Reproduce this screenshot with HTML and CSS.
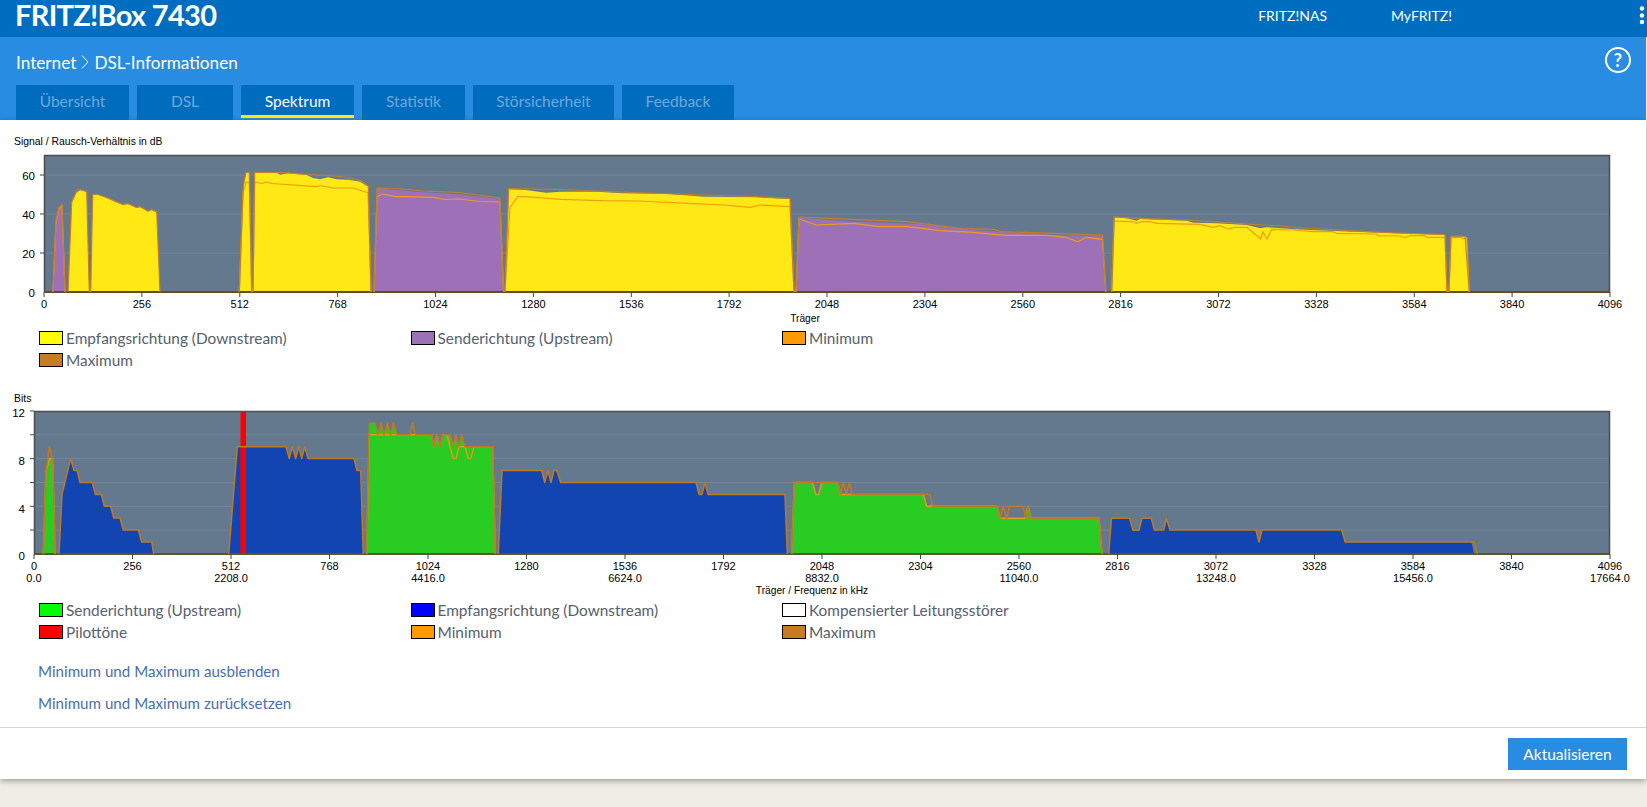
FILE: index.html
```html
<!DOCTYPE html>
<html lang="de">
<head>
<meta charset="utf-8">
<title>FRITZ!Box 7430 - DSL-Informationen</title>
<link rel="stylesheet" href="styles.css">
</head>
<body>
<div class="page">
  <header class="topbar">
    <div class="logo">FRITZ!Box 7430</div>
    <nav class="topnav"><a>FRITZ!NAS</a><a>MyFRITZ!</a></nav>
    <svg class="dots" width="6" height="22" viewBox="0 0 6 22"><circle cx="3" cy="2.5" r="2.2"/><circle cx="3" cy="9.5" r="2.2"/><circle cx="3" cy="16" r="2.2"/></svg>
  </header>
  <section class="band">
    <div class="crumbrow">
      <h1 class="crumb">Internet<svg class="chev" width="8" height="14" viewBox="0 0 8 14"><polyline points="1,0.5 7,7 1,13.5"/></svg>DSL-Informationen</h1>
      <div class="help">?</div>
    </div>
    <nav class="tabs">
      <a class="tab t1">Übersicht</a>
      <a class="tab t2">DSL</a>
      <a class="tab t3 active">Spektrum</a>
      <a class="tab t4">Statistik</a>
      <a class="tab t5">Störsicherheit</a>
      <a class="tab t6">Feedback</a>
    </nav>
  </section>
  <main class="panel">
    <svg class="chart c1" width="1646" height="195" viewBox="0 130 1646 195">
      <text class="title" x="14" y="145">Signal / Rausch-Verhältnis in dB</text>
      <rect class="plot" x="44" y="155" width="1566" height="137"/>
      <path class="grid" d="M44 175H1610M44 214H1610M44 253H1610"/>
      <path class="fy" d="M68 292L71.7 202.7 76 193 80 190 86.7 192 89.3 292Z"/>
      <path class="fy" d="M90.7 292L92.7 195 98.3 195 106.7 198 115 201.7 123 205 128 204 136.7 208 140 207 148 211.7 151.7 210 156.7 212.3 160 292Z"/>
      <path class="fy" d="M239.3 292L243.3 186.7 246 172.7 249.3 172.7 251.7 292Z"/>
      <path class="fy" d="M253 292L254.7 172.7 276.7 172.7 280 174.7 288.3 173.3 306.7 175 313 178 320 179.3 328 177.3 336.7 179.3 350 180 360 181.7 368.3 186.7 371 292Z"/>
      <path class="fy" d="M505 292L508.7 189.3 525.5 190 546 192.7 561 191.7 597 191.7 622.4 193.3 668 194 704 196.7 755 197.3 790 199 794 292Z"/>
      <path class="fy" d="M1111.7 292L1114.3 217.3 1126.7 218.3 1136.7 220.7 1140 219 1150 219.3 1186.7 220.7 1193 222.7 1216.7 223.3 1246.7 225 1260 228.3 1266.7 227.3 1280 228.3 1310 230 1353 231.7 1396.7 233.3 1445 235 1447 292Z"/>
      <path class="fy" d="M1449 292L1451 236.7 1465 236.7 1466.7 238 1469.3 292Z"/>
      <path class="fp" d="M53 292L56 220.7 59 208 62 205 62.5 205 65 292Z"/>
      <path class="fp" d="M374 292L377 188.3 398 190 423.5 192.3 459 194.3 485 197.3 500 198.7 503.6 292Z"/>
      <path class="fp" d="M796 292L799 217.7 854 221.7 919 224 973 230 1048.5 235 1102.5 235.7 1105.8 292Z"/>
      <path class="base" d="M44 292H1610"/>
      <path class="lmin" d="M53 292L56 222 59 209 62 206 65 292"/>
      <path class="lmin" d="M239.3 292L243 193 246 182.3 249.3 182.3 251.7 292M253 292L254.7 182 262 183.5 266 182 272 183.5 316.7 186.7 320 185.5 333 188 353 188 368 192.7 371 292"/>
      <path class="lmin" d="M374 292L377 196.7 382.7 194 395 196.7 408 196.7 433.7 197.3 445 199.5 459 199 480 201.5 500 202 503.6 292"/>
      <path class="lmin" d="M505 292L510 207 518 196.7 525.5 196.7 561 199.3 602 200.7 638 201 689 203.3 724.5 205 750 207.3 760 205 790 206.7 794 292"/>
      <path class="lmin" d="M796 292L799 219 816 225 854 223.3 878 226.7 908 226.7 940 230.7 973 232.3 1005 235.3 1048.5 235.3 1065 237.3 1078 241.7 1086 237.3 1102.5 239.3 1105.8 292"/>
      <path class="lmin" d="M1111.7 292L1114 221 1133 221.7 1136 223.3 1141.7 221.7 1150 221.7 1156.7 223.3 1200 224.3 1213 227.3 1220 225.7 1228 229 1235 227.3 1246.7 227.3 1260.7 239 1263 231.7 1267 239 1271.7 229.3 1293 230 1313 231.7 1333 231.7 1336.7 233.3 1376.7 234 1378 235.7 1400 236 1405 237.7 1410 235.7 1425 235.7 1426.7 237.3 1445 237.3 1447 292"/>
      <path class="lmin" d="M1449 292L1451 237.5 1461.7 237.5 1463 239 1466.7 237.5 1469.3 292"/>
      <path class="lmax" d="M53 292L56 220 59 207.5 62 204.5 65 292M68 292L71.7 202 76 192.5 80 189.5 86.7 191.5 89.3 292M90.7 292L92.7 194.5 98.3 194.5 106.7 197.5 115 201 123 204.5 128 203.5 136.7 207.5 140 206.5 148 211 151.7 209.5 156.7 212 160 292"/>
      <path class="lmax" d="M239.3 292L243.3 186 246 172.5 249.3 172.5 251.7 292M253 292L254.7 172.5 280 172.5 288.3 172.8 306.7 174.5 335 176 350 178 360 180.5 368.3 186 371 292"/>
      <path class="lmax" d="M374 292L377 188 398 188.5 423.5 191 459 192.5 485 196 500 198 503.6 292M505 292L508.7 188.5 560 189.5 620 192 704 195 755 196.5 790 198.5 794 292"/>
      <path class="lmax" d="M796 292L799 217 851 219.3 908 221.7 962 228.7 994.5 229.3 1000 231.7 1054 233.3 1102.5 235 1105.8 292"/>
      <path class="lmax" d="M1111.7 292L1114.3 217 1150 218.8 1186.7 220 1246.7 224 1280 226 1310 228.5 1353 230.8 1396.7 233 1445 234.5 1447 292M1449 292L1451 236 1465 236 1469.3 292"/>
      <path class="tick" d="M44 292V297M141.9 292V297M239.8 292V297M337.6 292V297M435.5 292V297M533.4 292V297M631.3 292V297M729.1 292V297M827 292V297M924.9 292V297M1022.8 292V297M1120.6 292V297M1218.5 292V297M1316.4 292V297M1414.3 292V297M1512.1 292V297M1610 292V297M40 175H44M40 214H44M40 253H44"/>
      <path class="frame" d="M44.5 292V155.5H1609.5V292"/>
      <g class="ylab">
        <text x="35" y="180">60</text><text x="35" y="219">40</text><text x="35" y="258">20</text><text x="35" y="297">0</text>
      </g>
      <g class="xlab">
        <text x="44" y="308">0</text><text x="141.9" y="308">256</text><text x="239.8" y="308">512</text><text x="337.6" y="308">768</text><text x="435.5" y="308">1024</text><text x="533.4" y="308">1280</text><text x="631.3" y="308">1536</text><text x="729.1" y="308">1792</text><text x="827" y="308">2048</text><text x="924.9" y="308">2304</text><text x="1022.8" y="308">2560</text><text x="1120.6" y="308">2816</text><text x="1218.5" y="308">3072</text><text x="1316.4" y="308">3328</text><text x="1414.3" y="308">3584</text><text x="1512.1" y="308">3840</text><text x="1610" y="308">4096</text>
      </g>
      <text class="axis" x="805" y="322">Träger</text>
    </svg>
    <ul class="legend lg1">
      <li><i class="sw yellow"></i>Empfangsrichtung (Downstream)</li>
      <li><i class="sw purple"></i>Senderichtung (Upstream)</li>
      <li><i class="sw orange"></i>Minimum</li>
      <li><i class="sw brown"></i>Maximum</li>
    </ul>
    <svg class="chart c2" width="1646" height="212" viewBox="0 388 1646 212">
      <text class="title" x="14" y="402">Bits</text>
      <rect class="plot" x="34" y="411" width="1576" height="143"/>
      <path class="grid" d="M34 434.8H1610M34 458.6H1610M34 482.5H1610M34 506.3H1610M34 530H1610"/>
      <path class="fg" d="M43.3 554L46 471.7 49.3 458.6 52.7 458.6 55 554Z"/>
      <path class="fb" d="M59 554L62 494.4 70.7 458.6 74 470.6 77.3 470.6 80 482.5 92.3 482.5 95.3 494.4 101.3 494.4 104.3 506.3 110.7 506.3 113.7 518 120 518 123.3 530 138.3 530 141.7 542 151.7 542 153.7 554Z"/>
      <path class="fb" d="M228.7 554L237.3 446.7 286 446.7 289.3 458.6 292.3 446.7 295.7 458.6 298.7 446.7 301.7 458.6 304.7 446.7 308 458.6 354 458.6 357 470.6 360.7 470.6 363.3 554Z"/>
      <path class="fg" d="M366.7 554L369.3 422.9 375 422.9 378.3 434.8 381 422.9 384 434.8 387.5 422.9 390.5 434.8 393.5 422.9 397 434.8 431.7 434.8 434 446.7 437 434.8 440 446.7 443 434.8 450 434.8 453.3 446.7 455.7 434.8 458.7 446.7 461.7 434.8 465 446.7 492.7 446.7 495.3 554Z"/>
      <path class="fb" d="M498.3 554L502 470.6 541.7 470.6 544.7 482.5 548 470.6 551 482.5 554 470.6 556.7 470.6 560.7 482.5 696 482.5 699 494.4 702 494.4 705 482.5 708 494.4 785 494.4 787.3 554Z"/>
      <path class="fg" d="M791.7 554L794.3 482.5 812.7 482.5 815.7 494.4 818.7 494.4 821.7 482.5 837.7 482.5 840.7 494.4 923.3 494.4 926.7 506.3 997.3 506.3 1000.3 518.3 1025 518.3 1028 506.3 1031.3 518.3 1099 518.3 1102 554Z"/>
      <path class="fb" d="M1108.7 554L1111.5 518.3 1129.6 518.3 1133 530.3 1139 530.3 1141.9 518.3 1151.3 518.3 1154.4 530 1163.8 530 1166.3 518.3 1170 530 1256 530 1259 542 1262 530 1341.7 530 1345.2 542 1471.5 542 1474 554Z"/>
      <rect class="pilot" x="240.5" y="411" width="5.5" height="143"/>
      <path class="base2" d="M34 554H1610"/>
      <path class="lmin2" d="M43.3 554L46 471.7 49.3 458.6 52.7 458.6 55 554"/>
      <path class="lmin2" d="M366.7 554L369.3 434.8 431.7 434.8 434 446.7 437 434.8 440 446.7 443 434.8 447 434.8 450 446.7 453.3 458.6 456 458.6 459 446.7 465 446.7 468.3 458.6 470.7 458.6 474 446.7 492.7 446.7 495.3 554"/>
      <path class="lmin2" d="M791.7 554L794.3 482.5 812.7 482.5 815.7 494.4 818.7 494.4 821.7 482.5 837.7 482.5 840.7 494.4 923.3 494.4 926.7 506.3 997.3 506.3 1000.3 518.3 1025 518.3 1028 506.3 1031.3 518.3 1099 518.3 1102 554"/>
      <path class="lmax2" d="M43.3 554L46 471.7 49.3 446.7 52.7 458.6 55 554M59 554L62 494.4 70.7 458.6 74 470.6 77.3 470.6 80 482.5 92.3 482.5 95.3 494.4 101.3 494.4 104.3 506.3 110.7 506.3 113.7 518 120 518 123.3 530 138.3 530 141.7 542 151.7 542 153.7 554"/>
      <path class="lmax2" d="M228.7 554L237.3 446.7 286 446.7 289.3 458.6 292.3 446.7 295.7 458.6 298.7 446.7 301.7 458.6 304.7 446.7 308 458.6 354 458.6 357 470.6 360.7 470.6 363.3 554"/>
      <path class="lmax2" d="M366.7 554L369.3 422.9 375 422.9 378.3 434.8 381 422.9 384 434.8 387.5 422.9 390.5 434.8 393.5 422.9 397 434.8 410 434.8 412.5 422.9 415.5 434.8 431.7 434.8 434 446.7 437 434.8 440 446.7 443 434.8 450 434.8 453.3 446.7 455.7 434.8 458.7 446.7 461.7 434.8 465 446.7 492.7 446.7 495.3 554"/>
      <path class="lmax2" d="M498.3 554L502 470.6 541.7 470.6 544.7 482.5 548 470.6 551 482.5 554 470.6 556.7 470.6 560.7 482.5 696 482.5 699 494.4 702 494.4 705 482.5 708 494.4 785 494.4 787.3 554"/>
      <path class="lmax2" d="M791.7 554L794.3 482.5 837.7 482.5 840.7 494.4 843.3 482.5 846.3 494.4 849.3 482.5 852.3 494.4 923.3 494.4 930 494.4 932.7 506.3 997.3 506.3 1000.3 518.3 1003.3 506.3 1006.7 518.3 1009.3 506.3 1022.7 506.3 1026 518.3 1028 506.3 1031.3 518.3 1099 518.3 1102 554"/>
      <path class="lmax2" d="M1108.7 554L1111.5 518.3 1129.6 518.3 1133 530.3 1139 530.3 1141.9 518.3 1151.3 518.3 1154.4 530 1163.8 530 1166.3 518.3 1170 530 1256 530 1259 542 1262 530 1341.7 530 1345.2 542 1474 542 1477.4 554"/>
      <path class="tick" d="M34 554V559M132.5 554V559M231 554V559M329.5 554V559M428 554V559M526.5 554V559M625 554V559M723.5 554V559M822 554V559M920.5 554V559M1019 554V559M1117.5 554V559M1216 554V559M1314.5 554V559M1413 554V559M1511.5 554V559M1610 554V559M30 411H34M30 434.8H34M30 458.6H34M30 482.5H34M30 506.3H34M30 530H34"/>
      <path class="frame" d="M34.5 554V411.5H1609.5V554"/>
      <g class="ylab">
        <text x="25" y="417">12</text><text x="25" y="465">8</text><text x="25" y="513">4</text><text x="25" y="560">0</text>
      </g>
      <g class="xlab">
        <text x="34" y="570">0</text><text x="132.5" y="570">256</text><text x="231" y="570">512</text><text x="329.5" y="570">768</text><text x="428" y="570">1024</text><text x="526.5" y="570">1280</text><text x="625" y="570">1536</text><text x="723.5" y="570">1792</text><text x="822" y="570">2048</text><text x="920.5" y="570">2304</text><text x="1019" y="570">2560</text><text x="1117.5" y="570">2816</text><text x="1216" y="570">3072</text><text x="1314.5" y="570">3328</text><text x="1413" y="570">3584</text><text x="1511.5" y="570">3840</text><text x="1610" y="570">4096</text>
        <text x="34" y="582">0.0</text><text x="231" y="582">2208.0</text><text x="428" y="582">4416.0</text><text x="625" y="582">6624.0</text><text x="822" y="582">8832.0</text><text x="1019" y="582">11040.0</text><text x="1216" y="582">13248.0</text><text x="1413" y="582">15456.0</text><text x="1610" y="582">17664.0</text>
      </g>
      <text class="axis" x="812" y="594">Träger / Frequenz in kHz</text>
    </svg>
    <ul class="legend lg2">
      <li><i class="sw green"></i>Senderichtung (Upstream)</li>
      <li><i class="sw blue"></i>Empfangsrichtung (Downstream)</li>
      <li><i class="sw white"></i>Kompensierter Leitungsstörer</li>
      <li><i class="sw red"></i>Pilottöne</li>
      <li><i class="sw orange"></i>Minimum</li>
      <li><i class="sw brown"></i>Maximum</li>
    </ul>
    <div class="links">
      <a>Minimum und Maximum ausblenden</a>
      <a>Minimum und Maximum zurücksetzen</a>
    </div>
    <footer class="foot"><button class="btn" type="button">Aktualisieren</button></footer>
  </main>
</div>
</body>
</html>
```
FILE: styles.css
```css
* { box-sizing: border-box; }
html, body { margin: 0; padding: 0; }
body {
  background: #f0ede6;
  font-family: "Lato", "Liberation Sans", sans-serif;
  height: 807px;
  overflow: hidden;
}
.topbar {
  height: 37px;
  background: #006ec0;
  display: flex;
  align-items: center;
  padding-left: 15px;
  color: #fff;
  position: relative;
}
.logo {
  font-size: 29px;
  font-weight: 700;
  letter-spacing: -0.7px;
  line-height: 30px;
  margin-top: -7px;
}
.topnav {
  margin-left: auto;
  margin-right: 195px;
  display: flex;
  gap: 64px;
  font-size: 14px;
  margin-top: -6px;
}
.dots { position: absolute; right: 2px; top: 6px; fill: #fff; }
.band {
  width: 1646px;
  height: 83px;
  background: #278ce2;
  display: flex;
  flex-direction: column;
}
.crumbrow {
  height: 48px;
  display: flex;
  align-items: center;
  justify-content: space-between;
  padding: 2px 15px 0 16px;
}
.crumb {
  margin: 0;
  color: #fff;
  font-size: 17.2px;
  font-weight: 400;
  display: flex;
  align-items: center;
}
.chev { margin: 0 5px 0 5px; fill: none; stroke: #fff; stroke-width: 1; }
.help {
  width: 26px;
  height: 26px;
  border: 2px solid #fff;
  border-radius: 50%;
  color: #fff;
  font-size: 18px;
  font-weight: 700;
  line-height: 22px;
  text-align: center;
  margin: -5px 0 0 0;
}
.tabs {
  height: 35px;
  display: flex;
  gap: 8px;
  padding-left: 16px;
}
.tab {
  background: #006cbe;
  color: #6ea9dd;
  font-size: 15.5px;
  height: 35px;
  line-height: 32px;
  text-align: center;
  position: relative;
}
.t1 { width: 113px; }
.t2 { width: 96px; }
.t3 { width: 113px; }
.t4 { width: 103px; }
.t5 { width: 141px; }
.t6 { width: 112px; }
.tab.active { color: #fff; border-bottom: 3px solid #ffe80f; height: 33px; }
.panel {
  width: 1646px;
  height: 659px;
  background: #fff;
  box-shadow: 0 2px 6px rgba(0, 0, 0, 0.35);
  padding-top: 10px;
  display: flex;
  flex-direction: column;
}
.chart { display: block; flex: none; font-family: "Liberation Sans", sans-serif; }
.title { font-size: 10.4px; fill: #000; }
.axis { font-size: 10.2px; fill: #000; text-anchor: middle; }
.ylab text { font-size: 11.5px; text-anchor: end; fill: #000; }
.xlab text { font-size: 11px; text-anchor: middle; fill: #000; }
.plot { fill: #64798e; }
.grid { stroke: #72869b; stroke-width: 1; fill: none; }
.frame { stroke: #4a4e52; stroke-width: 1.5; fill: none; }
.tick { stroke: #444; stroke-width: 1; fill: none; }
.fy { fill: #ffe914; }
.fp { fill: #9d70b8; }
.fg { fill: #28cc22; }
.fb { fill: #1244b2; }
.pilot { fill: #ff0000; }
.base { stroke: #6a4a20; stroke-width: 2; fill: none; }
.base2 { stroke: #57582a; stroke-width: 2; fill: none; }
.lmin, .lmax, .lmin2, .lmax2 { fill: none; stroke-width: 1.2; stroke-linejoin: round; }
.lmin { stroke: #f39c12; }
.lmax { stroke: #c97f26; }
.lmin2 { stroke: #e59a10; stroke-width: 1.5; }
.lmax2 { stroke: #c0791f; stroke-width: 1.5; }
.legend {
  list-style: none;
  margin: 0;
  padding: 0 0 0 39px;
  display: grid;
  grid-template-columns: repeat(3, 371.5px);
  grid-auto-rows: 22px;
  color: #56616c;
  font-size: 15.4px;
  flex: none;
}
.lg1 { height: 61px; margin-top: 2px; }
.lg2 { height: 44px; margin-top: -1px; }
.lg2 .sw { margin-top: 0; }
.legend li { display: flex; align-items: center; white-space: nowrap; }
.sw {
  width: 24px;
  height: 14px;
  border: 1px solid #000;
  margin-right: 3px;
  margin-top: -1px;
  flex: none;
}
.yellow { background: #ffff00; }
.purple { background: #9b72b8; }
.orange { background: #ff9900; }
.brown { background: #c87c22; }
.green { background: #00ff00; }
.blue { background: #0000ff; }
.white { background: #fff; }
.red { background: #ff0000; }
.links {
  display: flex;
  flex-direction: column;
  gap: 11px;
  padding: 18px 0 0 38px;
  font-size: 15.15px;
  line-height: 21px;
  color: #4a6eb0;
  flex: none;
}
.foot {
  margin-top: auto;
  height: 52px;
  border-top: 1px solid #d5d5d5;
  display: flex;
  justify-content: flex-end;
  padding: 10px 19px 0 0;
}
.btn {
  width: 119px;
  height: 32px;
  background: #278ce2;
  color: #fff;
  border: 0;
  font-family: inherit;
  font-size: 15.5px;
  padding: 0;
}
```
